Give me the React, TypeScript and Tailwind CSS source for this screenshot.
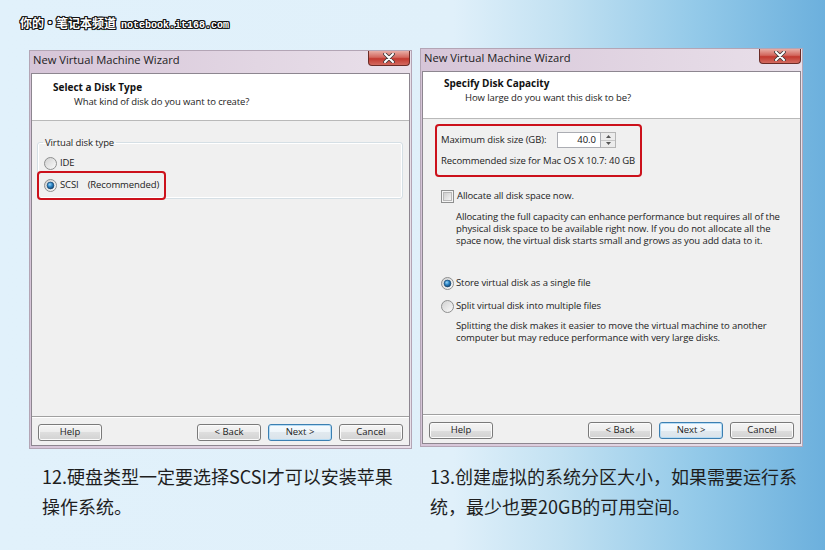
import React, { useId } from "react";

const UI: React.CSSProperties = { fontFamily: '"Open Sans", "Noto Sans", sans-serif' };

function Radio({ checked }: { checked?: boolean }) {
  const id = useId().replace(/:/g, "");
  return (
    <svg width="13" height="13" viewBox="0 0 13 13" className="shrink-0">
      <defs>
        <linearGradient id={`rb${id}`} x1="0" y1="0" x2="1" y2="1">
          <stop offset="0" stopColor="#cfcfcf" />
          <stop offset="1" stopColor="#fcfcfc" />
        </linearGradient>
        <radialGradient id={`rd${id}`} cx="0.4" cy="0.35" r="0.75">
          <stop offset="0" stopColor="#9ad6f7" />
          <stop offset="0.45" stopColor="#2b84c6" />
          <stop offset="1" stopColor="#0d365c" />
        </radialGradient>
      </defs>
      <circle cx="6.5" cy="6.5" r="6" fill={`url(#rb${id})`} stroke="#8e8f8f" />
      {checked && (
        <circle cx="6.5" cy="6.5" r="3.4" fill={`url(#rd${id})`} stroke="#1b4770" strokeWidth="0.7" />
      )}
    </svg>
  );
}

function Checkbox() {
  return (
    <svg width="13" height="13" viewBox="0 0 13 13" className="shrink-0">
      <defs>
        <linearGradient id="cbg" x1="0" y1="0" x2="1" y2="1">
          <stop offset="0" stopColor="#cbcbcb" />
          <stop offset="1" stopColor="#f6f6f6" />
        </linearGradient>
      </defs>
      <rect x="0.5" y="0.5" width="12" height="12" fill="#f4f4f4" stroke="#8e8f8f" />
      <rect x="2.5" y="2.5" width="8" height="8" fill="url(#cbg)" stroke="#b8b8b8" />
    </svg>
  );
}

function Btn({ children, primary }: { children: React.ReactNode; primary?: boolean }) {
  return (
    <div
      className={
        primary
          ? "h-[17px] w-[64px] flex items-center justify-center rounded-[3px] border border-[#3c7fb1] bg-[linear-gradient(#f7fbfe,#eef5fa_50%,#e1e9ef_50%,#dae3ea)] shadow-[inset_0_0_0_1px_#b6dcf5] text-[9.5px] text-[#222]"
          : "h-[17px] w-[64px] flex items-center justify-center rounded-[3px] border border-[#7a7a7a] bg-[linear-gradient(#f4f4f4,#ececec_50%,#dedede_50%,#d2d2d2)] shadow-[inset_0_0_0_1px_#fbfbfb] text-[9.5px] text-[#222]"
      }
    >
      {children}
    </div>
  );
}

function CloseBtn() {
  return (
    <div className="w-[42px] h-[15px] rounded-b-[4px] border border-t-0 border-[#6b2b26] bg-[linear-gradient(#e8aea6,#d3675d_45%,#c2392f_55%,#d36a5f)] flex items-center justify-center">
      <svg width="12" height="10" viewBox="0 0 12 10">
        <path d="M2 1 L10 9 M10 1 L2 9" stroke="#3a3a3a" strokeWidth="3.6" strokeLinecap="round" />
        <path d="M2 1 L10 9 M10 1 L2 9" stroke="#ffffff" strokeWidth="2" strokeLinecap="round" />
      </svg>
    </div>
  );
}

function Window({
  children,
  titlePad,
  title,
  subtitle,
}: {
  children: React.ReactNode;
  titlePad: string;
  title: string;
  subtitle: string;
}) {
  return (
    <div className="w-[383px] flex flex-col border border-[#b3a5b5] bg-[linear-gradient(90deg,#d6c5d8,#e2d6e3_60%,#e9e0ea)] px-[1px] pb-[2px]">
      <div className="h-[22px] flex items-start justify-between">
        <div className="pl-[2px] pt-[2px] text-[11.2px] leading-[14px] text-[#1c1c1c]">New Virtual Machine Wizard</div>
        <div>
          <CloseBtn />
        </div>
      </div>
      <div className="flex flex-col border border-[#8d8690] bg-[#f0f0f0]">
        <div className={`h-[47px] bg-white border-b border-[#b9b9b9] ${titlePad}`}>
          <div className="pl-[21px] text-[10px] leading-[13px] font-bold text-[#111]">{title}</div>
          <div className="pl-[42px] mt-[1px] text-[9.5px] tracking-[-0.1px] leading-[13px] text-[#222]">{subtitle}</div>
        </div>
        <div className="h-[295px] flex flex-col">{children}</div>
        <div className="h-[29px] flex flex-col">
          <div className="h-[1px] bg-[#a0a0a0]" />
          <div className="h-[1px] bg-white" />
          <div className="flex items-center px-[6px] pt-[6px]">
            <Btn>Help</Btn>
            <div className="flex-1" />
            <div className="flex gap-[7px]">
              <Btn>&lt; Back</Btn>
              <Btn primary>Next &gt;</Btn>
              <Btn>Cancel</Btn>
            </div>
          </div>
        </div>
      </div>
    </div>
  );
}

const T = "text-[9.5px] tracking-[-0.1px] text-[#222] whitespace-nowrap";

export default function App() {
  return (
    <div
      className="w-[825px] h-[550px] overflow-hidden bg-[linear-gradient(90deg,#e1f1fb_0%,#e0f0fa_55%,#c2e1f2_68%,#94cae9_84%,#6cb0dd_100%)]"
      style={UI}
    >
      <div className="h-[48px] pl-[20px] pt-[10px]">
        <span
          className="text-[12px] leading-[14px] font-bold text-white [text-shadow:1px_0_0_#111,-1px_0_0_#111,0_1px_0_#111,0_-1px_0_#111,1px_1px_0_#111,-1px_-1px_0_#111,1px_-1px_0_#111,-1px_1px_0_#111]"
          style={{ fontFamily: '"Noto Sans CJK SC", sans-serif' }}
        >
          你的·笔记本频道
          <span style={{ fontFamily: '"Liberation Mono", monospace' }} className="ml-[5px] text-[10px]">
            notebook.it168.com
          </span>
        </span>
      </div>

      <div className="flex items-start pl-[29px] gap-[8px]">
        <div className="mt-[2px] relative">
          <Window titlePad="pt-[7px]" title="Select a Disk Type" subtitle="What kind of disk do you want to create?">
            <fieldset className="mt-[15px] ml-[5px] mr-[6px] h-[63px] border border-[#d5dfe5] rounded-[3px] pl-[5px] shadow-[inset_0_0_0_1px_#ffffff]">
              <legend className={`px-[2px] leading-[13px] ${T}`}>Virtual disk type</legend>
              <div className={`ml-[1px] mt-[6px] flex items-center gap-[3px] h-[16px] ${T}`}>
                <Radio />
                <span>IDE</span>
              </div>
              <div className={`ml-[1px] mt-[6px] flex items-center gap-[3px] h-[16px] ${T}`}>
                <Radio checked />
                <span>SCSI</span>
                <span className="ml-[6px]">(Recommended)</span>
              </div>
            </fieldset>
          </Window>
          <div className="absolute left-[8px] top-[121px] w-[129px] h-[29px] border-[2.5px] border-[#cc111b] rounded-[4px]" />
        </div>

        <Window titlePad="pt-[5px]" title="Specify Disk Capacity" subtitle="How large do you want this disk to be?">
          <div className="mt-[5px] ml-[12px] w-[207px] h-[53px] border-[2.5px] border-[#cc111b] rounded-[4px] pl-[4px] pt-[6px]">
            <div className="flex items-center h-[16px]">
              <div className={`w-[116px] ${T}`}>Maximum disk size (GB):</div>
              <div className="w-[44px] h-[16px] border border-[#abadb3] bg-white text-right pr-[4px] text-[9.5px] leading-[14px] text-[#111]">
                40.0
              </div>
              <div className="w-[15px] h-[16px] flex flex-col border border-[#b5b5b5] border-l-0 bg-[#ececec]">
                <div className="flex-1 flex items-center justify-center border-b border-[#c8c8c8]">
                  <svg width="5" height="3" viewBox="0 0 5 3"><path d="M0 3 L2.5 0 L5 3Z" fill="#555" /></svg>
                </div>
                <div className="flex-1 flex items-center justify-center">
                  <svg width="5" height="3" viewBox="0 0 5 3"><path d="M0 0 L2.5 3 L5 0Z" fill="#555" /></svg>
                </div>
              </div>
            </div>
            <div className={`mt-[6px] leading-[13px] ${T}`}>Recommended size for Mac OS X 10.7: 40 GB</div>
          </div>

          <div className={`mt-[13px] ml-[18px] flex items-center gap-[3px] h-[13px] ${T}`}>
            <Checkbox />
            <span>Allocate all disk space now.</span>
          </div>
          <div className={`mt-[8px] ml-[33px] leading-[12px] ${T}`}>
            Allocating the full capacity can enhance performance but requires all of the
            <br />
            physical disk space to be available right now. If you do not allocate all the
            <br />
            space now, the virtual disk starts small and grows as you add data to it.
          </div>
          <div className={`mt-[30px] ml-[18px] flex items-center gap-[2px] h-[13px] ${T}`}>
            <Radio checked />
            <span>Store virtual disk as a single file</span>
          </div>
          <div className={`mt-[10px] ml-[18px] flex items-center gap-[2px] h-[13px] ${T}`}>
            <Radio />
            <span>Split virtual disk into multiple files</span>
          </div>
          <div className={`mt-[7px] ml-[33px] leading-[12px] ${T}`}>
            Splitting the disk makes it easier to move the virtual machine to another
            <br />
            computer but may reduce performance with very large disks.
          </div>
        </Window>
      </div>

      <div
        className="flex mt-[12px] text-[18px] leading-[30px] text-[#1e1e1e] whitespace-nowrap"
        style={{ fontFamily: '"Noto Sans CJK SC", sans-serif' }}
      >
        <div className="w-[388px] shrink-0 pl-[42px]">
          12.硬盘类型一定要选择SCSI才可以安装苹果
          <br />
          操作系统。
        </div>
        <div className="pl-[42px]">
          13.创建虚拟的系统分区大小，如果需要运行系
          <br />
          统，最少也要20GB的可用空间。
        </div>
      </div>
    </div>
  );
}
